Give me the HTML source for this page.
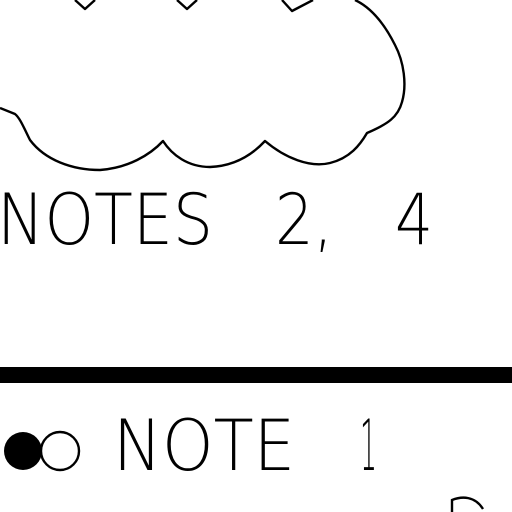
<!DOCTYPE html>
<html><head><style>html,body{margin:0;padding:0;background:#fff;width:512px;height:512px;overflow:hidden}</style></head>
<body>
<svg width="512" height="512" viewBox="0 0 512 512" xmlns="http://www.w3.org/2000/svg">
<rect width="512" height="512" fill="#fff"/>
<g fill="none" stroke="#000" stroke-width="2.4" stroke-linejoin="round">
<path d="M75,0 L85,9 L95,0 M177,0 L187,9 L197,0 M282,0 L292,11 L313,0"/>
<path d="M355,0 C372,8 385,25 395,45 C404,62 407,85 402,102 C398,117 388,124 367,133 C360,145 350,158 330,163 C310,168 285,158 265,141 C252,155 235,166 210,167 C188,167 172,155 163,141 C150,155 128,168 100,170 C72,170 45,160 30,140 C24,128 20,118 15,114 L0,108"/>
</g>
<g font-family="DejaVu Sans, Liberation Sans, sans-serif" font-weight="200" font-size="70" fill="#000">
<text x="-3" y="244" textLength="216" lengthAdjust="spacingAndGlyphs">NOTES</text>
<text x="275" y="244" textLength="58" lengthAdjust="spacingAndGlyphs">2,</text>
<text x="395" y="244" textLength="38" lengthAdjust="spacingAndGlyphs">4</text>
<text x="113" y="470" textLength="182" lengthAdjust="spacingAndGlyphs">NOTE</text>
<text x="360" y="470" textLength="17" lengthAdjust="spacingAndGlyphs">1</text>
</g>
<rect x="0" y="367" width="512" height="16" fill="#000"/>
<circle cx="23" cy="451" r="19" fill="#000"/>
<circle cx="60" cy="451" r="19" fill="none" stroke="#000" stroke-width="2.4"/>
<path d="M452,512 L452,500 C462,496 475,496 483,509" fill="none" stroke="#000" stroke-width="2.4"/>
</svg>
</body></html>
